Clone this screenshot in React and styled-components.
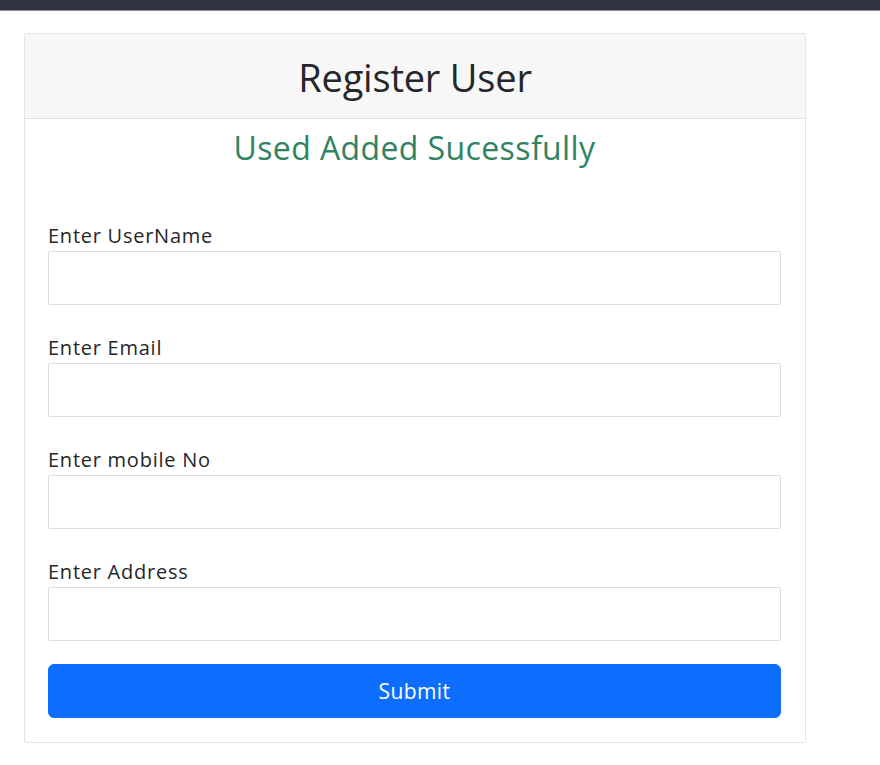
import React from "react";
import styled, { createGlobalStyle } from "styled-components";

const Global = createGlobalStyle`
  * { box-sizing: border-box; }
  body {
    margin: 0;
    background: #ffffff;
    font-family: "Open Sans", "Noto Sans", sans-serif;
    color: #252729;
  }
`;

const TopBar = styled.div`
  height: 11px;
  background: #2f3342;
  border-bottom: 1px solid #8b8e98;
`;

const Page = styled.main`
  padding: 22px 0 0 24px;
`;

const Card = styled.section`
  width: 782px;
  border: 1px solid #e6e6e6;
  border-radius: 2px;
  background: #fff;
`;

const CardHeader = styled.header`
  height: 85px;
  background: #f7f7f7;
  border-bottom: 1px solid #e0e0e0;
  display: flex;
  align-items: center;
  justify-content: center;
`;

const Title = styled.h1`
  margin: 0;
  font-size: 38px;
  font-weight: 400;
  letter-spacing: -0.2px;
  line-height: 1;
  padding-top: 2px;
`;

const CardBody = styled.div`
  padding: 10px 24px 24px 23px;
`;

const Message = styled.h3`
  margin: 0 0 56px;
  text-align: center;
  font-size: 32px;
  font-weight: 400;
  color: #2f8361;
  line-height: 38px;
  letter-spacing: 0.4px;
`;

const Field = styled.div`
  margin-bottom: ${(p) => (p.$last ? "23px" : "30px")};
`;

const Label = styled.label`
  display: block;
  font-size: 20px;
  line-height: 26px;
  margin-bottom: 2px;
  letter-spacing: 0.75px;
`;

const Input = styled.input`
  display: block;
  width: 100%;
  height: 54px;
  border: 1px solid #dcdcdc;
  border-radius: 2px;
  background: #fff;
  font: inherit;
  font-size: 19px;
  padding: 0 14px;
  outline: none;
`;

const SubmitButton = styled.button`
  display: block;
  width: 100%;
  height: 54px;
  background: #0d6efd;
  border: 1px solid #0d6efd;
  border-radius: 6px;
  color: #fff;
  font-family: "Open Sans", "Noto Sans", sans-serif;
  font-size: 21px;
  letter-spacing: 0.4px;
  cursor: pointer;
`;

const fields = ["Enter UserName", "Enter Email", "Enter mobile No", "Enter Address"];

export default function App() {
  return (
    <>
      <Global />
      <TopBar />
      <Page>
        <Card>
          <CardHeader>
            <Title>Register User</Title>
          </CardHeader>
          <CardBody>
            <Message>Used Added Sucessfully</Message>
            {fields.map((f, i) => (
              <Field key={f} $last={i === fields.length - 1}>
                <Label>{f}</Label>
                <Input type="text" />
              </Field>
            ))}
            <SubmitButton type="button">Submit</SubmitButton>
          </CardBody>
        </Card>
      </Page>
    </>
  );
}
